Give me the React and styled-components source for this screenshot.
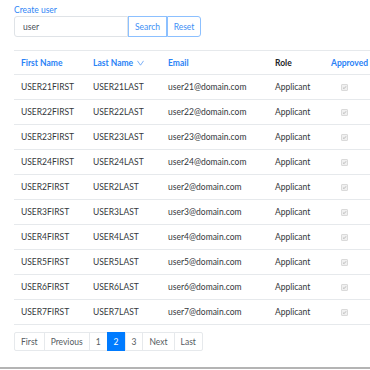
import React from "react";
import styled, { createGlobalStyle } from "styled-components";

const GlobalStyle = createGlobalStyle`
  html, body {
    margin: 0;
    padding: 0;
    background: #ffffff;
    overflow: hidden;
  }
  body {
    font-family: Lato, "Open Sans", sans-serif;
    font-size: 8.5px;
    color: #212529;
  }
`;

const users = [21, 22, 23, 24, 2, 3, 4, 5, 6, 7];

const columns = [
  { key: "first", label: "First Name", width: 72, sortable: true },
  { key: "last", label: "Last Name", width: 75, sortable: true, sorted: true },
  { key: "email", label: "Email", width: 107, sortable: true },
  { key: "role", label: "Role", width: 56 },
  { key: "approved", label: "Approved", width: 60, sortable: true },
];

function Users() {
  return (
    <Page>
      <CreateLink href="#">Create user</CreateLink>
      <SearchBar>
        <SearchInput defaultValue="user" />
        <OutlineButton $width={39}>Search</OutlineButton>
        <OutlineButton $width={34}>Reset</OutlineButton>
      </SearchBar>

      <Table>
        <colgroup>
          {columns.map((c) => (
            <col key={c.key} style={{ width: c.width }} />
          ))}
        </colgroup>
        <thead>
          <tr>
            {columns.map((c) => (
              <HeadCell key={c.key} $sortable={c.sortable}>
                {c.label}
                {c.sorted && (
                  <SortIcon viewBox="0 0 8 6">
                    <polyline points="0.5,0.5 4,5.5 7.5,0.5" />
                  </SortIcon>
                )}
              </HeadCell>
            ))}
          </tr>
        </thead>
        <tbody>
          {users.map((n) => (
            <tr key={n}>
              <Cell>USER{n}FIRST</Cell>
              <Cell>USER{n}LAST</Cell>
              <Cell>user{n}@domain.com</Cell>
              <Cell>Applicant</Cell>
              <Cell>
                <Check>
                  <svg viewBox="0 0 6 6">
                    <polyline points="1.2,3.2 2.5,4.4 4.8,1.6" />
                  </svg>
                </Check>
              </Cell>
            </tr>
          ))}
        </tbody>
      </Table>

      <Pagination>
        <PageItem>First</PageItem>
        <PageItem>Previous</PageItem>
        <PageItem>1</PageItem>
        <PageItem $active>2</PageItem>
        <PageItem>3</PageItem>
        <PageItem>Next</PageItem>
        <PageItem>Last</PageItem>
      </Pagination>
      <BottomRule />
    </Page>
  );
}

export default function App() {
  return (
    <>
      <GlobalStyle />
      <Users />
    </>
  );
}

const Page = styled.div`
  width: 370px;
  height: 370px;
  padding: 4px 0 0 14px;
  box-sizing: border-box;
  position: relative;
`;

const CreateLink = styled.a`
  display: block;
  color: #2f86f6;
  text-decoration: none;
  font-size: 8.5px;
  line-height: 12px;
  height: 12px;
`;

const SearchBar = styled.div`
  display: flex;
  height: 21px;
`;

const SearchInput = styled.input`
  width: 114px;
  height: 21px;
  box-sizing: border-box;
  border: 1px solid #dfe3e7;
  border-radius: 3px 0 0 3px;
  padding: 0 8px;
  font-family: Lato, "Open Sans", sans-serif;
  font-size: 8.5px;
  color: #495057;
  outline: none;
`;

const OutlineButton = styled.button`
  width: ${(p) => p.$width}px;
  height: 21px;
  box-sizing: border-box;
  border: 1px solid #8cc0ff;
  background: #fff;
  color: #3d8ff5;
  font-family: Lato, "Open Sans", sans-serif;
  font-size: 8.5px;
  padding: 0;
  border-radius: 0;
  &:last-child {
    border-radius: 0 3px 3px 0;
  }
`;

const Table = styled.table`
  margin-top: 13px;
  border-collapse: collapse;
  table-layout: fixed;
  width: 370px;
  border-top: 1px solid #e6e9ec;
`;

const HeadCell = styled.th`
  height: 23px;
  padding: 0 7px;
  text-align: left;
  font-weight: 700;
  color: ${(p) => (p.$sortable ? "#2a82f6" : "#212529")};
  border-bottom: 1px solid #e6e9ec;
  white-space: nowrap;
`;

const SortIcon = styled.svg`
  width: 7px;
  height: 6px;
  margin-left: 4px;
  vertical-align: 0px;
  polyline {
    fill: none;
    stroke: #5a9cf4;
    stroke-width: 0.9;
  }
`;

const Cell = styled.td`
  height: 24px;
  padding: 0 7px;
  border-bottom: 1px solid #e6e9ec;
  white-space: nowrap;
  color: #33373b;
`;

const Check = styled.span`
  display: inline-block;
  width: 5px;
  height: 5px;
  border: 1px solid #dadada;
  border-radius: 1px;
  background: #f0f0f0;
  vertical-align: middle;
  margin-left: 10px;
  svg {
    display: block;
    width: 5px;
    height: 5px;
  }
  polyline {
    fill: none;
    stroke: #a8a8a8;
    stroke-width: 0.9;
  }
`;

const Pagination = styled.div`
  display: flex;
  margin-top: 7px;
  height: 19px;
`;

const PageItem = styled.span`
  display: flex;
  align-items: center;
  padding: 0 6px;
  height: 19px;
  box-sizing: border-box;
  border: 1px solid #e6e9ec;
  margin-left: -1px;
  background: ${(p) => (p.$active ? "#007bff" : "#fff")};
  border-color: ${(p) => (p.$active ? "#007bff" : "#e6e9ec")};
  color: ${(p) => (p.$active ? "#fff" : "#555b61")};
  &:first-child {
    margin-left: 0;
    border-radius: 2px 0 0 2px;
  }
  &:last-child {
    border-radius: 0 2px 2px 0;
  }
`;

const BottomRule = styled.div`
  position: absolute;
  left: 0;
  right: 0;
  bottom: 1px;
  height: 2px;
  background: #b4b4b4;
`;
